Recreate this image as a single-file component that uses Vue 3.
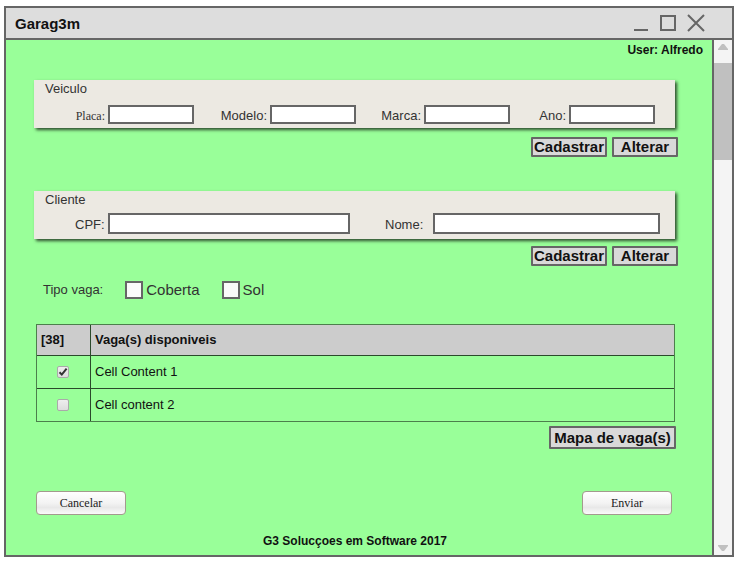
<script setup>
import { ref } from 'vue'

const vehicleFields = [
  { id: 'placa', label: 'Placa:', serif: true },
  { id: 'modelo', label: 'Modelo:' },
  { id: 'marca', label: 'Marca:' },
  { id: 'ano', label: 'Ano:' },
]
const clientFields = [
  { id: 'cpf', label: 'CPF:' },
  { id: 'nome', label: 'Nome:' },
]
const spots = ref([
  { id: 'spot-1', name: 'Cell Content 1', checked: true },
  { id: 'spot-2', name: 'Cell content 2', checked: false },
])
</script>

<template>
  <div class="window">
    <header class="titlebar">
      <h1>Garag3m</h1>
      <div class="controls">
        <button type="button" aria-label="Minimizar">
          <svg width="16" height="18" viewBox="0 0 16 18"><path d="M1 16H15" /></svg>
        </button>
        <button type="button" aria-label="Maximizar">
          <svg width="16" height="18" viewBox="0 0 16 18"><path d="M1 2H15V16H1Z" /></svg>
        </button>
        <button type="button" aria-label="Fechar">
          <svg width="18" height="18" viewBox="0 0 18 18"><path d="M1 1L17 17M17 1L1 17" /></svg>
        </button>
      </div>
    </header>

    <div class="body">
      <main class="content">
        <p class="user">User: Alfredo</p>

        <section class="panel">
          <h2>Veiculo</h2>
          <div class="fields vehicle">
            <div v-for="f in vehicleFields" :key="f.id" class="field">
              <label :for="f.id" :class="{ serif: f.serif }">{{ f.label }}</label>
              <input :id="f.id" type="text" />
            </div>
          </div>
        </section>
        <div class="actions">
          <button type="button" class="btn create">Cadastrar</button>
          <button type="button" class="btn edit">Alterar</button>
        </div>

        <section class="panel second">
          <h2>Cliente</h2>
          <div class="fields client">
            <div v-for="f in clientFields" :key="f.id" class="field" :class="f.id">
              <label :for="f.id">{{ f.label }}</label>
              <input :id="f.id" type="text" />
            </div>
          </div>
        </section>
        <div class="actions close">
          <button type="button" class="btn create">Cadastrar</button>
          <button type="button" class="btn edit">Alterar</button>
        </div>

        <div class="types" role="group" aria-labelledby="tipo">
          <span id="tipo">Tipo vaga:</span>
          <label><input type="checkbox" />Coberta</label>
          <label><input type="checkbox" />Sol</label>
        </div>

        <table>
          <thead>
            <tr><th class="pick">[38]</th><th>Vaga(s) disponiveis</th></tr>
          </thead>
          <tbody>
            <tr v-for="s in spots" :key="s.id">
              <td class="pick">
                <span class="check">
                  <input :id="s.id" v-model="s.checked" type="checkbox" />
                  <svg v-if="s.checked" width="12" height="12" viewBox="0 0 12 12"><path d="M2.5 6.2L4.8 8.6L9.6 2.6" /></svg>
                </span>
              </td>
              <td><label :for="s.id">{{ s.name }}</label></td>
            </tr>
          </tbody>
        </table>

        <div class="map"><button type="button" class="btn wide">Mapa de vaga(s)</button></div>

        <div class="submit">
          <button type="button">Cancelar</button>
          <button type="submit">Enviar</button>
        </div>

        <footer>G3 Solucçoes em Software 2017</footer>
      </main>

      <div class="scrollbar" aria-hidden="true">
        <svg width="10" height="6" viewBox="0 0 10 6"><path d="M0 6V5L4 0H6L10 5V6Z" /></svg>
        <div class="thumb"></div>
        <svg class="down" width="10" height="6" viewBox="0 0 10 6"><path d="M0 0V1L4 6H6L10 1V0Z" /></svg>
      </div>
    </div>
  </div>
</template>

<style>
body {
  margin: 0;
  background: #fff;
}
</style>

<style scoped>
* {
  box-sizing: border-box;
}
.window {
  display: flex;
  flex-direction: column;
  min-height: calc(100vh - 12px);
  margin: 6px 6px 6px 4px;
  border: 2px solid #666;
  font: 13px/16px "Liberation Sans", Arial, sans-serif;
  color: #333;
}
h1, h2, p {
  margin: 0;
}
button {
  margin: 0;
  padding: 0;
  font-family: inherit;
}
.titlebar {
  display: flex;
  align-items: center;
  justify-content: space-between;
  height: 32px;
  padding: 0 27px 0 9px;
  background: #ddd;
  border-bottom: 2px solid #666;
}
h1 {
  font-size: 15px;
  line-height: 20px;
  padding-top: 2px;
  color: #111;
}
.controls {
  display: flex;
  gap: 11px;
}
.controls button {
  display: flex;
  border: 0;
  background: none;
}
.controls path {
  fill: none;
  stroke: #666;
  stroke-width: 2;
}
.body {
  display: flex;
  flex: 1;
}
.content {
  display: flex;
  flex-direction: column;
  flex: 1;
  padding: 2px 37px 6px 28px;
  background: #9f9;
}
.user {
  margin-right: -28px;
  font-size: 12px;
  font-weight: bold;
  text-align: right;
  color: #111;
}
.panel {
  height: 48px;
  margin-top: 22px;
  background: #ece9e2;
  box-shadow: 2px 2px 3px rgba(0, 0, 0, 0.7);
}
.panel.second {
  margin-top: 34px;
}
h2 {
  padding-left: 11px;
  font-size: 13px;
  font-weight: normal;
  line-height: 18px;
}
.fields {
  display: grid;
  padding: 7px 20px 0 41px;
}
.vehicle {
  grid-template-columns: 119fr 162fr 154fr 145fr;
}
.client {
  grid-template-columns: 275fr 310fr;
  padding: 4px 15px 0 41px;
}
.field {
  display: flex;
  align-items: center;
  justify-content: flex-end;
  gap: 3px;
}
.field label {
  padding-top: 2px;
}
.field input {
  width: 86px;
  height: 19px;
  padding: 0 4px;
  border: 2px solid #666;
  background: #fff;
  font: inherit;
}
.client input {
  flex: 1;
  height: 21px;
}
.nome {
  padding-left: 35px;
  gap: 10px;
}
.serif {
  font: 12px/16px "Liberation Serif", "Times New Roman", serif;
}
.actions {
  display: flex;
  justify-content: flex-end;
  gap: 5px;
  margin: 9px -3px 0 0;
}
.actions.close {
  margin-top: 7px;
}
.btn {
  height: 20px;
  border: 2px solid #666;
  border-radius: 1px;
  background: #d9d9d9;
  font-size: 15px;
  font-weight: bold;
  line-height: 16px;
  color: #111;
  white-space: nowrap;
}
.create {
  width: 76px;
}
.edit {
  width: 66px;
}
.types {
  display: flex;
  align-items: center;
  margin-top: 15px;
  padding-left: 9px;
  gap: 22px;
}
.types label {
  display: flex;
  align-items: center;
  gap: 3px;
  font-size: 15px;
  line-height: 18px;
}
.types input {
  appearance: none;
  width: 18px;
  height: 18px;
  margin: 0;
  border: 2px solid #666;
  background: #fafafa;
}
table {
  margin: 25px 0 0 2px;
  border: 1px solid rgba(0, 0, 0, 0.5);
  border-spacing: 0;
  color: #111;
}
th, td {
  height: 33px;
  padding: 0 4px;
  border-top: 1px solid #2b4a2b;
  text-align: left;
}
th {
  height: 30px;
  border-top: 0;
  background: #ccc;
}
th + th, td + td {
  border-left: 1px solid #2b4a2b;
}
.pick {
  width: 53px;
}
td.pick {
  padding: 0 5px 2px 4px;
  text-align: center;
}
.check {
  position: relative;
  display: inline-flex;
  vertical-align: middle;
}
.check input {
  appearance: none;
  width: 12px;
  height: 12px;
  margin: 0;
  border: 1px solid #aaa;
  border-radius: 2px;
  background: linear-gradient(#eee, #ddd);
}
.check svg {
  position: absolute;
  inset: 0;
  pointer-events: none;
}
.check path {
  fill: none;
  stroke: #333;
  stroke-width: 2;
}
.map {
  display: flex;
  justify-content: flex-end;
  margin: 4px -1px 0 0;
}
.wide {
  width: 127px;
  height: 23px;
}
.submit {
  display: flex;
  justify-content: space-between;
  margin: 42px 3px 0 2px;
}
.submit button {
  width: 90px;
  height: 24px;
  border: 1px solid #a39a8e;
  border-radius: 4px;
  background: linear-gradient(#fff, #f3f3f3 50%, #e8e8e8 70%, #fafafa);
  font: 12px/16px "Liberation Serif", "Times New Roman", serif;
  color: #222;
}
footer {
  margin: auto -37px 0 -28px;
  padding-right: 8px;
  font-size: 12px;
  font-weight: bold;
  text-align: center;
  color: #111;
}
.scrollbar {
  display: flex;
  flex-direction: column;
  align-items: center;
  width: 20px;
  padding: 4px 0;
  border-left: 2px solid #666;
  background: #f4f4f4;
}
.scrollbar path {
  fill: #c0c0c0;
}
.thumb {
  align-self: stretch;
  height: 97px;
  margin-top: 13px;
  background: #c0c0c0;
}
.down {
  margin-top: auto;
}
</style>
